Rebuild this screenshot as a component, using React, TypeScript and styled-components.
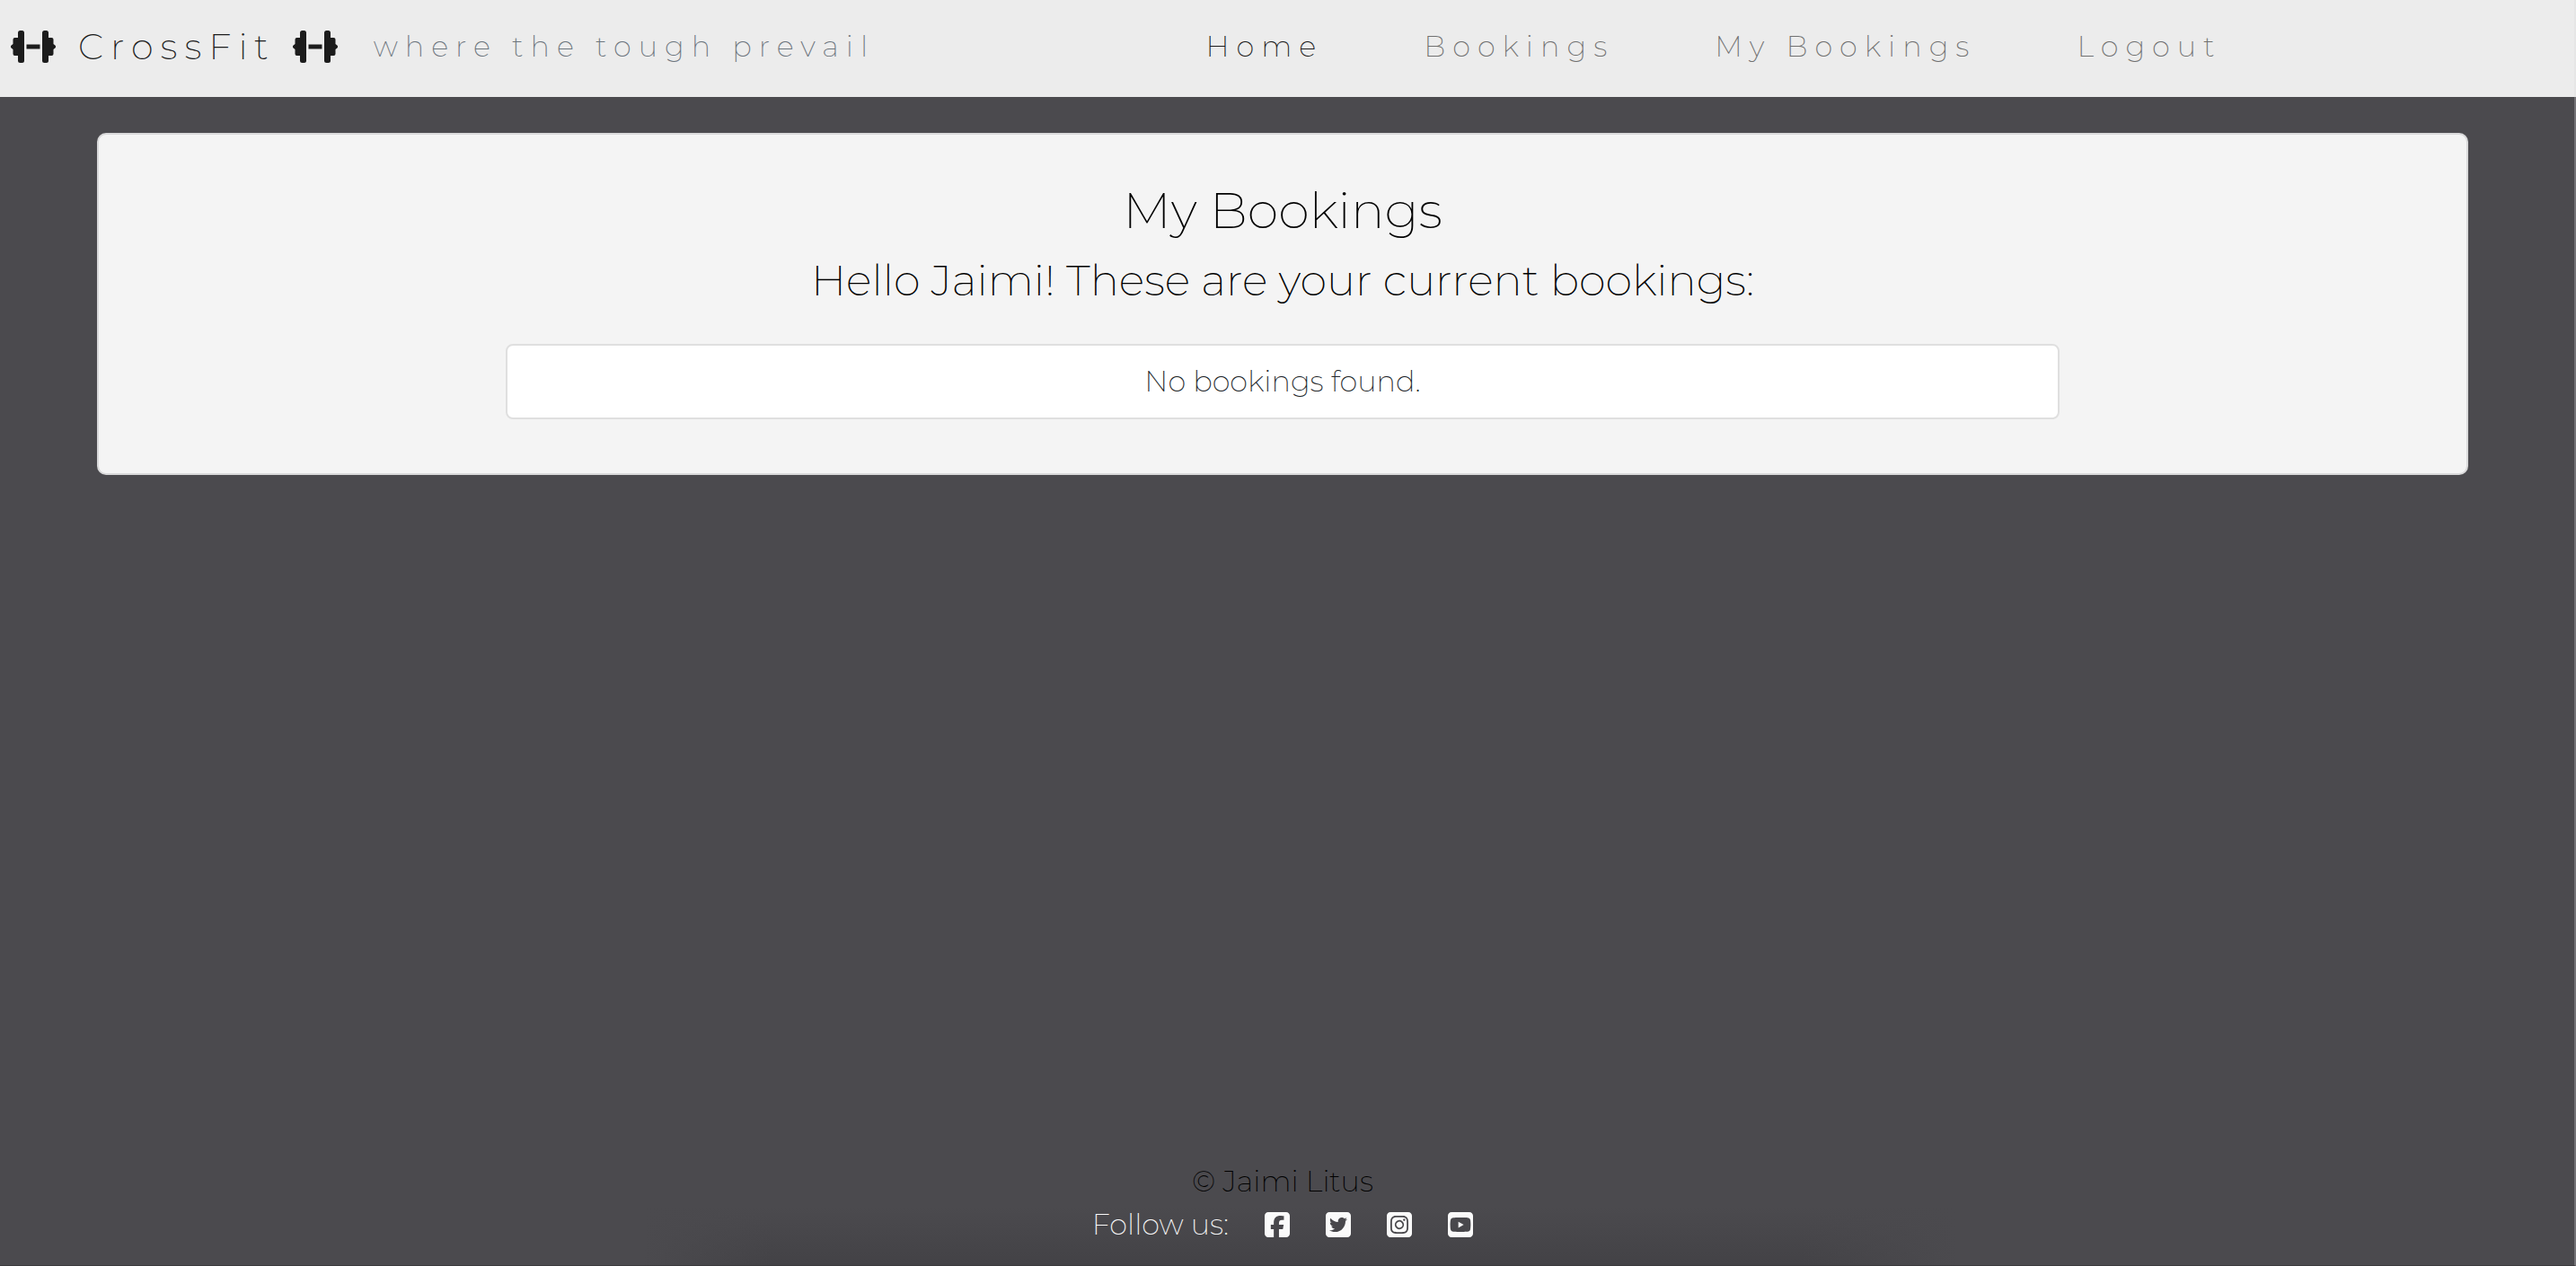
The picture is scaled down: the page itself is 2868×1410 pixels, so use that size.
import React from "react";
import styled, { createGlobalStyle } from "styled-components";
import {
  FaSquareFacebook,
  FaSquareTwitter,
  FaSquareInstagram,
  FaSquareYoutube,
} from "react-icons/fa6";

const GlobalStyle = createGlobalStyle`
  *, *::before, *::after { box-sizing: border-box; }
  body {
    margin: 0;
    background: #4b4a4e;
    color: #212529;
    font-family: Montserrat, Inter, "Liberation Sans", sans-serif;
    font-size: 32px;
    font-weight: 200;
    line-height: 48px;
  }
  h1, h2, p, ul { margin: 0; padding: 0; font-weight: inherit; }
`;

const Page = styled.div`
  display: flex;
  flex-direction: column;
  min-height: 100vh;
`;

const NavBar = styled.header`
  display: flex;
  align-items: center;
  height: 108px;
  padding: 0 24px 4px 12px;
  border-right: 2px solid #e6e6e6;
  background: #ececec;
  letter-spacing: 8px;
`;

const Brand = styled.a`
  display: flex;
  align-items: center;
  gap: 19px;
  color: #1c1c1c;
  font-size: 40px;
  text-decoration: none;
`;

const BrandName = styled.span`
  padding-left: 6px;
`;

const DumbbellSvg = styled.svg`
  display: block;
  width: 50px;
  height: 36px;
`;

const Tagline = styled.span`
  margin-left: 40px;
  color: #6c757d;
`;

const NavLinks = styled.nav`
  display: flex;
  flex: 1;
  justify-content: center;
  gap: 112px;
`;

const NavLink = styled.a<{ $active?: boolean }>`
  color: ${(p) => (p.$active ? "#1c1c1c" : "#707070")};
  text-decoration: none;
`;

const Main = styled.main`
  flex: 1;
  padding: 40px 10px 40px 0;
  border-right: 2px solid #737276;
`;

const Card = styled.section`
  display: flex;
  flex-direction: column;
  align-items: center;
  max-width: 2640px;
  margin: 0 auto;
  padding: 48px 20px 60px;
  border: 2px solid #d9d9da;
  border-radius: 10px;
  background: #f4f4f4;
  color: #000;
  text-align: center;
`;

const Title = styled.h1`
  margin-bottom: 8px;
  font-size: 56px;
  line-height: 72px;
`;

const Greeting = styled.h2`
  margin-bottom: 37px;
  font-size: 48px;
  line-height: 68px;
`;

const BookingList = styled.ul`
  width: calc(100% * 2 / 3);
  list-style: none;
`;

const BookingItem = styled.li`
  padding: 16px 24px;
  border: 2px solid #dfdfdf;
  border-radius: 8px;
  background: #fff;
  color: #212529;
`;

const Footer = styled.footer`
  padding: 0 10px 21px 0;
  border-right: 2px solid #737276;
  border-bottom: 1px solid #3a393c;
  background:
    linear-gradient(90deg, #4b4a4e 25%, transparent 30%, transparent 70%, #4b4a4e 76%),
    linear-gradient(to top, #434246, #4b4a4e 64px);
  text-align: center;
`;

const Copyright = styled.p`
  color: #000;
`;

const Social = styled.div`
  display: flex;
  align-items: center;
  justify-content: center;
  gap: 40px;
  color: #fafafa;
`;

const SocialLink = styled.a`
  display: flex;
  color: inherit;

  svg {
    width: 28px;
    height: 32px;
  }
`;

const Dumbbell = () => (
  <DumbbellSvg viewBox="0 0 50 36" fill="currentColor" aria-hidden="true">
    <rect x="8" y="0" width="7" height="36" rx="2.5" />
    <path d="M4.5 8H10V28H4.5A2 2 0 0 1 2.5 26V21L0.6 19.4A2 2 0 0 1 0.6 16.6L2.5 15V10A2 2 0 0 1 4.5 8Z" />
    <rect x="17.5" y="15.5" width="15" height="5" />
    <rect x="35" y="0" width="7" height="36" rx="2.5" />
    <path d="M45.5 8H40V28H45.5A2 2 0 0 0 47.5 26V21L49.4 19.4A2 2 0 0 0 49.4 16.6L47.5 15V10A2 2 0 0 0 45.5 8Z" />
  </DumbbellSvg>
);

const links = ["Home", "Bookings", "My Bookings", "Logout"];

const socials = [
  { name: "Facebook", Icon: FaSquareFacebook },
  { name: "Twitter", Icon: FaSquareTwitter },
  { name: "Instagram", Icon: FaSquareInstagram },
  { name: "YouTube", Icon: FaSquareYoutube },
];

export default function App() {
  return (
    <>
      <GlobalStyle />
      <Page>
        <NavBar>
          <Brand href="#">
            <Dumbbell />
            <BrandName>CrossFit</BrandName>
            <Dumbbell />
          </Brand>
          <Tagline>where the tough prevail</Tagline>
          <NavLinks>
            {links.map((label, i) => (
              <NavLink key={label} href="#" $active={i === 0}>
                {label}
              </NavLink>
            ))}
          </NavLinks>
        </NavBar>
        <Main>
          <Card>
            <Title>My Bookings</Title>
            <Greeting>Hello Jaimi! These are your current bookings:</Greeting>
            <BookingList>
              <BookingItem>No bookings found.</BookingItem>
            </BookingList>
          </Card>
        </Main>
        <Footer>
          <Copyright>© Jaimi Litus</Copyright>
          <Social>
            <span>Follow us:</span>
            {socials.map(({ name, Icon }) => (
              <SocialLink key={name} href="#" aria-label={name}>
                <Icon />
              </SocialLink>
            ))}
          </Social>
        </Footer>
      </Page>
    </>
  );
}
